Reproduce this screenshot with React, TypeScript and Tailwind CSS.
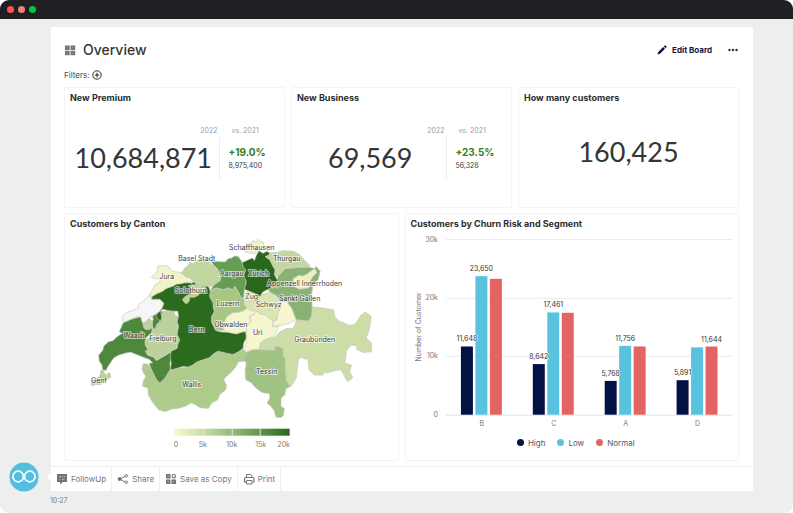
import React from 'react';
import clsx from 'clsx';

type Kpi = {
  title: string;
  value: string;
  change?: string;
  previous?: string;
};

const kpis: Kpi[] = [
  { title: 'New Premium', value: '10,684,871', change: '+19.0%', previous: '8,975,400' },
  { title: 'New Business', value: '69,569', change: '+23.5%', previous: '56,328' },
  { title: 'How many customers', value: '160,425' },
];

const cantons = [
  { name: 'Wallis', fill: '#aecb8c', points: '250,462 262,462 270,470 280,490 290,510 300,520 330,480 350,476 385,472 412,456 430,450 448,444 474,424 500,430 520,434 536,426 550,418 560,428 578,420 564,436 556,454 536,456 528,472 516,486 498,502 492,510 500,526 498,540 480,554 474,570 456,580 446,596 420,594 406,584 394,580 376,590 354,596 336,598 316,606 296,600 280,580 266,558 264,535 248,530 250,514 258,500 250,488 246,476' },
  { name: 'Waadt', fill: '#4e883c', points: '190,338 215,328 243,320 250,340 252,352 258,360 278,354 274,340 280,330 278,320 290,308 300,304 312,306 304,340 284,362 272,372 258,384 256,400 264,420 258,424 264,436 282,442 290,452 336,425 338,440 330,460 332,478 315,505 300,520 290,510 280,490 270,468 268,460 278,460 270,450 250,442 230,434 212,427 196,430 176,436 162,444 152,458 144,470 138,482 128,480 126,466 118,454 116,436 128,422 132,408 146,396 160,392 172,380 188,370 178,366' },
  { name: 'Genf', fill: '#b6d096', points: '94,510 110,506 120,498 122,482 130,480 134,492 142,498 143,490 150,490 153,502 140,510 128,516 124,524 108,524 94,528' },
  { name: 'Freiburg', fill: '#bcd29a', points: '278,352 286,358 290,344 300,334 302,314 310,306 324,302 342,304 346,316 356,320 352,340 356,372 360,390 356,404 352,416 334,424 310,438 290,452 282,442 262,434 256,424 266,420 256,406 256,390 268,384 274,372' },
  { name: 'Broye', fill: '#bcd29a', points: '256,334 270,326 278,336 278,352 268,360 252,354 250,342' },
  { name: 'Neuenburg', fill: '#f5f5f5', points: '270,256 274,268 300,268 312,280 308,292 300,304 286,314 270,322 258,334 248,340 243,322 232,320 215,326 200,334 190,338 188,328 190,316 200,308 220,302 236,294 236,284 250,274 262,262' },
  { name: 'Bern', fill: '#2c6b1d', points: '276,260 290,252 308,244 318,236 340,228 350,222 382,218 396,220 404,214 410,226 424,228 438,226 448,232 452,246 450,258 462,270 460,290 464,306 456,320 456,338 462,350 468,362 482,366 510,368 530,372 548,366 558,366 560,384 552,400 550,416 536,426 520,434 500,430 474,424 462,432 448,444 430,450 412,456 398,466 385,472 370,470 350,476 336,480 332,476 334,462 332,440 334,424 352,416 354,404 360,390 352,374 356,350 352,336 356,320 354,304 340,304 324,302 308,298 302,306 306,322 302,334 292,326 288,316 300,304 308,292 312,280 300,268 276,268' },
  { name: 'Jura', fill: '#f0f5c8', points: '274,202 284,192 292,186 294,168 318,167 328,172 334,184 352,186 368,190 378,200 392,204 398,212 394,218 376,217 360,222 350,222 340,228 328,232 318,236 308,244 290,250 276,260 268,256 278,240 284,226 296,218 304,208 284,206' },
  { name: 'Basel', fill: '#c1d79f', points: '362,188 370,184 372,176 384,168 388,158 400,160 412,152 424,154 430,152 448,154 454,164 462,166 466,176 476,180 486,200 480,214 462,226 448,232 436,226 412,226 400,214 392,204 378,200' },
  { name: 'Solothurn', fill: '#bcd29a', points: '368,268 378,258 392,252 396,232 384,228 400,224 412,226 430,230 438,226 436,244 420,246 416,256 404,262 390,262 388,274 380,282 372,276' },
  { name: 'Aargau', fill: '#669d55', points: '452,153 496,156 506,146 516,144 524,138 536,140 548,158 558,180 554,196 560,216 554,240 552,262 546,266 534,244 526,230 518,240 504,234 490,240 470,234 452,240 462,226 482,212 484,200 476,180 462,166' },
  { name: 'Luzern', fill: '#a7c783', points: '452,242 470,234 490,240 504,234 518,240 526,230 534,244 546,266 554,264 554,284 562,296 548,304 535,308 520,310 504,318 494,340 490,362 470,362 458,340 456,320 464,306 460,280 450,262' },
  { name: 'Zug', fill: '#e0eaba', points: '552,258 562,244 574,246 588,252 600,260 586,272 568,274 554,276' },
  { name: 'Schwyz', fill: '#d9e5b3', points: '554,280 568,274 586,272 594,262 604,256 630,246 650,256 664,276 662,296 654,312 652,330 640,334 626,324 616,314 600,312 590,304 570,298 560,294' },
  { name: 'Obwalden', fill: '#f3f5ca', points: '492,342 500,322 520,308 536,308 550,304 562,296 572,302 590,304 584,314 572,318 568,330 574,336 562,344 560,364 548,366 530,372 510,368 492,362' },
  { name: 'Uri', fill: '#f5f6cd', points: '572,318 584,314 590,304 600,312 616,314 626,324 640,334 638,350 656,350 650,366 640,380 620,388 602,400 600,418 578,420 560,428 554,418 560,400 560,350 574,336' },
  { name: 'Glarus', fill: '#f5f6cd', points: '662,276 680,270 688,284 698,298 708,330 690,340 664,346 640,350 640,334 652,330 654,312 662,296' },
  { name: 'St. Gallen', fill: '#8bb274', points: '656,198 676,176 704,172 750,172 764,176 770,170 782,184 776,208 760,226 756,252 758,300 756,320 746,334 710,330 698,298 680,272 664,276 650,256 630,246 626,240 650,212' },
  { name: 'Appenzell', fill: '#ecf1c2', points: '700,206 718,196 730,198 742,192 756,182 766,176 772,188 760,200 750,216 748,234 720,238 702,230' },
  { name: 'Thurgau', fill: '#c3d8a0', points: '616,140 628,128 650,128 670,122 702,124 720,134 734,150 752,168 740,172 726,168 708,174 676,176 656,198 646,200 646,180 638,164' },
  { name: 'Zürich', fill: '#2b671a', points: '548,158 564,150 578,144 584,152 590,136 598,122 610,130 622,124 630,130 626,136 616,140 630,150 638,166 646,180 644,194 654,212 644,224 630,236 610,246 600,260 588,252 574,246 554,238 560,216 552,196 558,180 550,170' },
  { name: 'Schaffhausen', fill: '#eef3c6', points: '554,120 562,102 576,98 578,92 590,96 594,88 604,96 610,94 612,106 606,120 596,124 588,130 570,130 556,126' },
  { name: 'Graubünden', fill: '#cddda7', points: '758,291 790,294 822,300 826,322 840,334 870,346 885,344 894,332 904,316 918,306 935,320 932,345 926,370 920,384 936,400 936,426 910,428 890,418 892,406 872,408 860,424 858,450 856,460 876,466 870,486 880,504 864,516 856,502 844,480 828,482 800,490 798,482 790,496 764,496 748,480 744,446 734,448 728,442 716,448 714,470 710,504 694,530 680,514 676,460 670,438 670,418 658,410 646,410 644,422 600,418 602,400 620,388 644,382 660,366 680,356 700,356 706,344 710,330 746,334 756,320' },
  { name: 'Tessin', fill: '#a0c283', points: '560,428 578,420 606,420 644,422 646,410 660,410 670,418 670,438 678,448 676,470 678,490 680,514 692,530 678,538 676,554 664,566 664,590 674,596 672,616 664,624 648,622 644,604 632,588 622,580 630,566 630,552 606,548 588,534 574,518 558,510 556,480 560,460 552,450' },
];

// labels sit on top of the shapes, some of them well outside their canton
const cantonLabels = [
  { text: 'Schaffhausen', x: 252, y: 250 },
  { text: 'Basel Stadt', x: 197, y: 261 },
  { text: 'Thurgau', x: 287, y: 261 },
  { text: 'Jura', x: 167, y: 279 },
  { text: 'Aargau', x: 232, y: 276 },
  { text: 'Zürich', x: 259, y: 276 },
  { text: 'Appenzell Innerrhoden', x: 305, y: 286 },
  { text: 'Solothurn', x: 191, y: 293 },
  { text: 'Zug', x: 252, y: 299 },
  { text: 'Sankt Gallen', x: 300, y: 301 },
  { text: 'Luzern', x: 228, y: 306 },
  { text: 'Schwyz', x: 269, y: 307 },
  { text: 'Obwalden', x: 231, y: 327 },
  { text: 'Bern', x: 197, y: 332 },
  { text: 'Uri', x: 258, y: 335 },
  { text: 'Waadt', x: 134, y: 338 },
  { text: 'Freiburg', x: 163, y: 341 },
  { text: 'Graubünden', x: 315, y: 342 },
  { text: 'Tessin', x: 267, y: 374 },
  { text: 'Genf', x: 99, y: 383 },
  { text: 'Wallis', x: 192, y: 387 },
];

const segments = [
  { name: 'B', values: [11648, 23650, 23200], labels: ['11,648', '23,650', ''] },
  { name: 'C', values: [8642, 17461, 17400], labels: ['8,642', '17,461', ''] },
  { name: 'A', values: [5768, 11756, 11650], labels: ['5,768', '11,756', ''] },
  { name: 'D', values: [5891, 11500, 11644], labels: ['5,891', '', '11,644'] },
];

const series = [
  { name: 'High', color: '#031243', dot: 'bg-[#031243]' },
  { name: 'Low', color: '#59c3df', dot: 'bg-[#59c3df]' },
  { name: 'Normal', color: '#e36463', dot: 'bg-[#e36463]' },
];

const Card = ({ title, children }: { title: string; children: React.ReactNode }) => (
  <section className="flex min-w-0 flex-col rounded-xs border border-[#f3f4f4] bg-white">
    <h2 className="px-[5px] pt-1 text-[9px] leading-[11px] font-bold text-[#2b2d2f]">{title}</h2>
    {children}
  </section>
);

const KpiCard = ({ title, value, change, previous }: Kpi) => (
  <Card title={title}>
    {change ? (
      <div className="flex h-[104px] pt-[22px]">
        <div className="w-[71%]">
          <p className="pr-[3px] text-right text-[7px] leading-[12px] text-[#9a9da0]">2022</p>
          <p className="flex h-[42px] items-center justify-center border-r border-[#ededee] pl-[2px] font-[Lato] text-[27px] text-[#333536]">
            {value}
          </p>
        </div>
        <div className="pl-2">
          <p className="pl-[3px] text-[7px] leading-[12px] text-[#9a9da0]">vs. 2021</p>
          <p className="pt-2 text-[10px] leading-[14px] font-bold text-[#35801f]">{change}</p>
          <p className="text-[7px] leading-[14px] text-[#3c3e40]">{previous}</p>
        </div>
      </div>
    ) : (
      <p className="flex h-[104px] items-center justify-center pb-[6px] font-[Lato] text-[27px] text-[#333536]">{value}</p>
    )}
  </Card>
);

const CantonMap = () => (
  <svg viewBox="65 229 333 231" className="w-full" role="img" aria-label="Customers by Canton">
    <defs>
      <linearGradient id="scale">
        <stop offset="0" stopColor="#f8f9cf" />
        <stop offset="0.25" stopColor="#ccdda6" />
        <stop offset="0.5" stopColor="#94bb7b" />
        <stop offset="0.75" stopColor="#5e944c" />
        <stop offset="1" stopColor="#2b671a" />
      </linearGradient>
      <pattern id="empty" width="9" height="9" patternUnits="userSpaceOnUse">
        <rect width="9" height="9" fill="#f8f8f8" />
        <circle cx="3" cy="3" r="1.5" fill="#e4e4e4" />
      </pattern>
    </defs>
    <g transform="translate(60 210) scale(0.33333)" stroke="#c5c8c2" strokeWidth="2" strokeLinejoin="round">
      {cantons.map((canton) => (
        <polygon
          key={canton.name}
          points={canton.points}
          fill={canton.name === 'Neuenburg' ? 'url(#empty)' : canton.fill}
        />
      ))}
    </g>
    <g fontSize="7" textAnchor="middle" fill="#3f4144" stroke="#ffffff" strokeOpacity="0.6" strokeWidth="2" strokeLinejoin="round" paintOrder="stroke">
      {cantonLabels.map((label) => (
        <text key={label.text} x={label.x} y={label.y}>
          {label.text}
        </text>
      ))}
    </g>
    <rect x="174" y="429" width="116" height="7" fill="url(#scale)" />
    <path d="M203.5 429v7M232.5 429v7M260.5 429v7" stroke="#dfe6d2" strokeWidth="1" />
    <g fontSize="7" textAnchor="middle" fill="#77797c">
      <text x="176" y="447">0</text>
      <text x="203" y="447">5k</text>
      <text x="232" y="447">10k</text>
      <text x="261" y="447">15k</text>
      <text x="284" y="447">20k</text>
    </g>
  </svg>
);

const baseline = 415;
const barHeight = (value: number) => (value * 176) / 30000;

const ChurnChart = () => (
  <svg viewBox="406 229 333 203" className="w-full" role="img" aria-label="Customers by Churn Risk and Segment">
    <path d="M446 239.5H733M446 298.5H733M446 356.5H733" stroke="#ececec" />
    <path d="M446 415.5H733" stroke="#dce5e9" />
    <g fontSize="7" textAnchor="end" fill="#77797c">
      <text x="438" y="242">30k</text>
      <text x="438" y="300">20k</text>
      <text x="438" y="358">10k</text>
      <text x="438" y="417">0</text>
    </g>
    <text transform="translate(421 327) rotate(-90)" fontSize="7" textAnchor="middle" fill="#77797c">
      Number of Customer
    </text>
    {segments.map((segment, i) => {
      const left = 461 + i * 72;
      return (
        <g key={segment.name} fontSize="7" textAnchor="middle">
          {segment.values.map((value, j) => (
            <rect
              key={series[j].name}
              x={left + j * 14.5}
              y={baseline - barHeight(value)}
              width="12"
              height={barHeight(value)}
              fill={series[j].color}
            />
          ))}
          {segment.labels.map((label, j) => (
            <text
              key={series[j].name}
              x={left + 6 + j * 14.5}
              y={baseline - barHeight(segment.values[j]) - 5}
              fill="#333536"
              stroke="#ffffff"
              strokeWidth="1"
              paintOrder="stroke"
            >
              {label}
            </text>
          ))}
          <text x={left + 21} y="426" fill="#77797c">
            {segment.name}
          </text>
        </g>
      );
    })}
  </svg>
);

const FollowUpIcon = () => (
  <svg viewBox="0 0 12 12" className="size-3" fill="#6f7478">
    <path d="M1 1h10v8H6.500L4 11.500V9H1z" />
    <path d="M3 3.500h1.500v1.500M3 6.500h1M6 6.500h2.500M6.500 3v1.500M8.800 3v1.500" stroke="#c6cacd" strokeWidth=".7" fill="none" />
  </svg>
);

const ShareIcon = () => (
  <svg viewBox="0 0 12 12" className="size-3" fill="#6f7478">
    <path d="M3 6l6-3M3 6l6 3.500" stroke="#6f7478" strokeWidth="1" />
    <circle cx="2.600" cy="6" r="1.900" />
    <circle cx="9.300" cy="2.800" r="1.200" fill="#fff" stroke="#6f7478" />
    <circle cx="9.300" cy="9.300" r="1.200" fill="#fff" stroke="#6f7478" />
  </svg>
);

const CopyIcon = () => (
  <svg viewBox="0 0 12 12" className="size-3" fill="#6f7478">
    <rect x="1" y="1" width="4.500" height="4.500" />
    <rect x="1" y="6.500" width="4.500" height="4.500" />
    <rect x="6.500" y="6.500" width="4.500" height="4.500" />
    <circle cx="8.800" cy="3.200" r="1.700" fill="none" stroke="#6f7478" strokeWidth="1.100" />
    <path d="M2.500 3.200h1.500M2.500 8.700h1.500M8 8.700h1.500" stroke="#c6cacd" strokeWidth=".8" />
  </svg>
);

const PrintIcon = () => (
  <svg viewBox="0 0 12 12" className="size-3" fill="none" stroke="#6f7478" strokeLinejoin="round">
    <path d="M3.500 4.500V1.500h4l1.500 1.500v1.500" />
    <path d="M3 9H1.500V6q0-1.500 1.500-1.500h6.500Q11 4.500 11 6v3H9.500" strokeWidth="1.200" />
    <path d="M3.500 7.500h5.500v3.500H3.500z" />
  </svg>
);

const actions = [
  { label: 'FollowUp', icon: <FollowUpIcon /> },
  { label: 'Share', icon: <ShareIcon /> },
  { label: 'Save as Copy', icon: <CopyIcon /> },
  { label: 'Print', icon: <PrintIcon /> },
];

const App = () => {
  return (
    <div className="min-h-screen bg-white font-['Inter',sans-serif]">
      <div className="flex min-h-screen flex-col overflow-hidden rounded-[9px] bg-[#edefef]">
        <header className="flex h-[19px] items-center gap-1 bg-[#1e2023] px-[7px]">
          <span className="size-[7px] rounded-full bg-[#ff5450]" />
          <span className="size-[7px] rounded-full bg-[#ec827a]" />
          <span className="size-[7px] rounded-full bg-[#08c43c]" />
        </header>
        <div className="flex items-end pt-2 pr-10">
          <div className="-mb-px flex w-[51px] shrink-0 items-center justify-between pl-[9px]">
            <svg viewBox="0 0 30 30" className="size-[30px]" role="img" aria-label="Avatar">
              <circle cx="15" cy="15" r="14.5" fill="#53bedd" />
              <circle cx="9.200" cy="14.500" r="5.300" fill="none" stroke="#fff" strokeWidth="1.700" />
              <circle cx="20.800" cy="14.500" r="5.300" fill="none" stroke="#fff" strokeWidth="1.700" />
            </svg>
            <span className="border-y-4 border-r-4 border-y-transparent border-r-white" />
          </div>
          <main className="min-w-0 grow bg-white">
            <div className="pt-[14px] pr-[14px] pl-[13px]">
              <div className="flex h-[18px] items-center">
                <svg viewBox="0 0 12 12" className="size-3" fill="#72777b">
                  <path d="M1 1.500h4.700v4.500H1zM6.500 1.500h4.700v4.500H6.500zM1 6.800h4.700v4.500H1zM6.500 6.800h4.700v4.500H6.500z" />
                  <path d="M2.500 3.700h1.500M8 3.700h1.500M2.500 9h1.500M8 9h1.500" stroke="#8d979d" />
                </svg>
                <h1 className="pl-[7px] text-[14px] leading-[18px] font-medium text-[#333536]">Overview</h1>
                <button className="ml-auto flex items-center gap-[5px] text-[8px] font-bold text-[#0b1747]">
                  <svg viewBox="0 0 10 10" className="size-[10px]" fill="#0b1747">
                    <path d="M.5 9.500L1.200 7 6.200 2 8 3.800 3 8.800zM6.800 1.400L7.800.5q.4-.3.800 0l.9.900q.3.400 0 .8l-.9 1z" />
                  </svg>
                  Edit Board
                </button>
                <button aria-label="More" className="mr-[1px] ml-4">
                  <svg viewBox="0 0 10 4" className="h-1 w-[10px]" fill="#2b2d2f">
                    <circle cx="1.500" cy="2" r="1.200" />
                    <circle cx="5" cy="2" r="1.200" />
                    <circle cx="8.500" cy="2" r="1.200" />
                  </svg>
                </button>
              </div>
              <div className="flex h-7 items-center gap-[3px] pt-[3px] text-[8px] text-[#4a4c4f]">
                Filters:
                <button aria-label="Add filter">
                  <svg viewBox="0 0 10 10" className="size-[10px]" fill="none" stroke="#2f3133">
                    <circle cx="5" cy="5" r="4.200" />
                    <path d="M5 2.800v4.400M2.800 5h4.400" strokeWidth="1.200" />
                  </svg>
                </button>
              </div>
              <div className="grid grid-cols-3 gap-[6px]">
                {kpis.map((kpi) => (
                  <KpiCard key={kpi.title} {...kpi} />
                ))}
              </div>
              <div className="mt-[5px] grid grid-cols-2 gap-[6px]">
                <Card title="Customers by Canton">
                  <CantonMap />
                </Card>
                <Card title="Customers by Churn Risk and Segment">
                  <ChurnChart />
                  <ul className="flex items-center justify-center gap-3 pt-1 pl-2 text-[8px] leading-[14px] text-[#55585b]">
                    {series.map((item) => (
                      <li key={item.name} className="flex items-center gap-1">
                        <span className={clsx('size-[7px] rounded-full', item.dot)} />
                        {item.name}
                      </li>
                    ))}
                  </ul>
                </Card>
              </div>
            </div>
            <nav className="mt-[5px] flex border-t border-[#eeefef]">
              {actions.map((action) => (
                <button
                  key={action.label}
                  className="flex h-6 items-center gap-[3px] border-r border-[#f0f1f1] px-[5px] text-[8px] text-[#73787c]"
                >
                  {action.icon}
                  {action.label}
                </button>
              ))}
            </nav>
          </main>
        </div>
        <time className="pt-1 pl-[50px] text-[7px] leading-[12px] text-[#7a7e81]">10:27</time>
      </div>
    </div>
  );
};

export default App;
